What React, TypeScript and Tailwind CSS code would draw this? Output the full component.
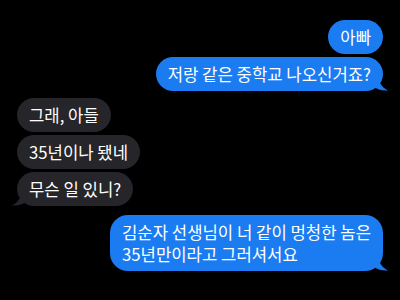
function Tail({ side, color }: { side: "left" | "right"; color: string }) {
  const pos = side === "right" ? "-right-[7px]" : "-left-[7px] -scale-x-100";
  return (
    <svg
      className={`absolute bottom-0 ${pos}`}
      width="17"
      height="18"
      viewBox="0 0 17 18"
    >
      <path d="M0 0 L5 0 C5 8 8 14 15 17.5 C9 18 4 16.5 1 13.5 Z" fill={color} />
    </svg>
  );
}

function Bubble({
  text,
  side,
  tail = false,
}: {
  text: React.ReactNode;
  side: "left" | "right";
  tail?: boolean;
}) {
  const color = side === "right" ? "#1b7cf2" : "#262529";
  return (
    <div
      className={`relative rounded-[18px] px-[12px] py-[6px] text-[16.7px] leading-[22px] text-white ${
        side === "right" ? "self-end bg-[#1b7cf2]" : "self-start bg-[#262529]"
      }`}
    >
      {tail && <Tail side={side} color={color} />}
      <span className="relative">{text}</span>
    </div>
  );
}

export default function App() {
  return (
    <div
      className="flex h-[300px] w-[400px] flex-col overflow-hidden bg-black px-[17px] pt-[20px]"
      style={{ fontFamily: '"Noto Sans CJK KR", "Noto Sans", sans-serif' }}
    >
      <div className="flex flex-col gap-[3px]">
        <Bubble side="right" text="아빠" />
        <Bubble side="right" text="저랑 같은 중학교 나오신거죠?" tail />
      </div>

      <div className="mt-[7px] flex flex-col gap-[3px]">
        <Bubble side="left" text="그래, 아들" />
        <Bubble side="left" text="35년이나 됐네" />
        <Bubble side="left" text="무슨 일 있니?" tail />
      </div>

      <div className="mt-[9px] flex flex-col">
        <Bubble
          side="right"
          tail
          text={
            <>
              김순자 선생님이 너 같이 멍청한 놈은
              <br />
              35년만이라고 그러셔서요
            </>
          }
        />
      </div>
    </div>
  );
}
